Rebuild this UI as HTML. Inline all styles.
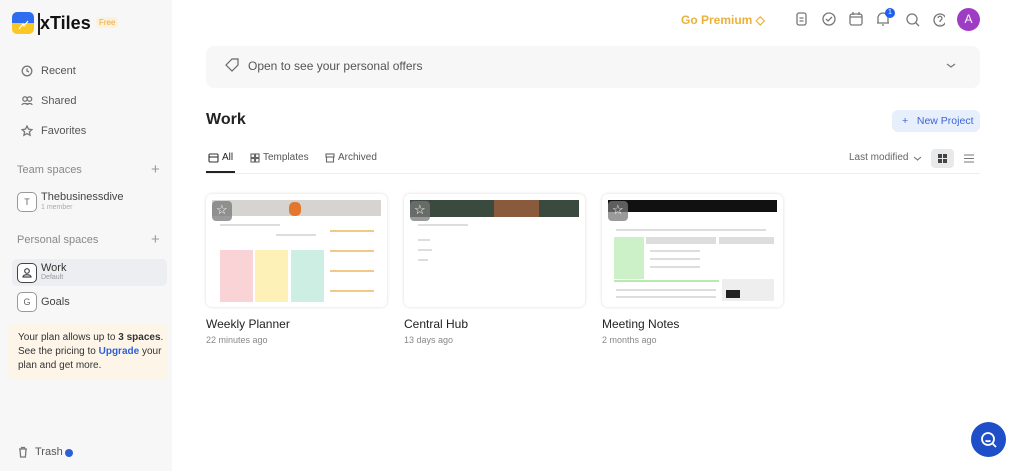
<!DOCTYPE html><html><head><style>
*{box-sizing:border-box;margin:0;padding:0}
body{width:1020px;height:471px;overflow:hidden;font-family:"Liberation Sans",sans-serif;background:#fff;position:relative;color:#222}
.sb{position:absolute;left:0;top:0;width:172px;height:471px;background:#f7f7f8}
.a{position:absolute;white-space:nowrap}
.nav{font-size:11px;color:#555}
.ic{stroke:#777;fill:none;stroke-width:1.3}
.box{position:absolute;width:20px;height:20px;border:1px solid #999;border-radius:5px;font-size:9px;color:#666;text-align:center;line-height:18px;background:#fff}
.card{position:absolute;top:194px;width:181px;height:113px;border-radius:6px;background:#fff;box-shadow:0 0 3px rgba(0,0,0,.15);overflow:hidden}
.star{position:absolute;left:6px;top:7px;width:20px;height:20px;background:rgba(120,120,120,.75);border-radius:4px}
.star:after{content:"\2606";position:absolute;left:4px;top:1px;color:#fff;font-size:13px}
.t{font-size:12px;color:#222}.s{font-size:9px;color:#888}
.ln{position:absolute;height:2px;background:#ddd}
</style></head><body>
<div class="sb"></div>
<div class="a" style="left:12px;top:12px;width:22px;height:11px;background:#2d6ef0;border-radius:5px 5px 0 0"></div>
<div class="a" style="left:12px;top:23px;width:22px;height:11px;background:#f9c823;border-radius:0 0 5px 5px"></div>
<svg class="a" style="left:12px;top:12px" width="22" height="22"><path d="M7 17l4-5 1 2 4-5" stroke="#fff" stroke-width="1.2" fill="none"/></svg>
<div class="a" style="left:38px;top:13px;width:1.5px;height:22px;background:#222"></div>
<div class="a" style="left:40px;top:13px;font-size:18px;font-weight:bold;color:#111">xTiles</div>
<div class="a" style="left:96px;top:17px;font-size:8px;color:#e8a93b;background:#fcf1dc;padding:1px 3px;border-radius:3px">Free</div>
<svg class="a" style="left:21px;top:65px" width="12" height="12"><circle class="ic" cx="6" cy="6" r="4.8"/><path class="ic" d="M6 3.5V6l2 1"/></svg>
<div class="a nav" style="left:41px;top:65px">Recent</div>
<svg class="a" style="left:21px;top:95px" width="12" height="12"><circle class="ic" cx="4" cy="4" r="2.2"/><circle class="ic" cx="8.5" cy="4" r="2.2"/><path class="ic" d="M1 10c0-2 6-2 6 0M6 10c0-2 5-2 5 0"/></svg>
<div class="a nav" style="left:41px;top:95px">Shared</div>
<svg class="a" style="left:21px;top:125px" width="12" height="12"><path class="ic" d="M6 1l1.5 3.2 3.4.4-2.5 2.3.7 3.4L6 8.6 2.9 10.3l.7-3.4L1.1 4.6l3.4-.4z"/></svg>
<div class="a nav" style="left:41px;top:125px">Favorites</div>
<div class="a nav" style="left:17px;top:164px;color:#888">Team spaces</div>
<div class="a" style="left:151px;top:161px;font-size:15px;color:#999">+</div>
<div class="box" style="left:17px;top:192px">T</div>
<div class="a" style="left:41px;top:191px;font-size:11px;color:#444">Thebusinessdive</div>
<div class="a" style="left:41px;top:204px;font-size:7px;color:#aaa">1 member</div>
<div class="a nav" style="left:17px;top:234px;color:#888">Personal spaces</div>
<div class="a" style="left:151px;top:231px;font-size:15px;color:#999">+</div>
<div class="a" style="left:12px;top:259px;width:155px;height:27px;background:#eceef1;border-radius:5px"></div>
<div class="box" style="left:17px;top:263px;border-color:#444"><svg width="18" height="18"><circle cx="9" cy="7" r="2.3" fill="none" stroke="#444" stroke-width="1.2"/><path d="M5 13c0-3 8-3 8 0z" fill="none" stroke="#444" stroke-width="1.2"/></svg></div>
<div class="a" style="left:41px;top:262px;font-size:11px;color:#333">Work</div>
<div class="a" style="left:41px;top:274px;font-size:7px;color:#999">Default</div>
<div class="box" style="left:17px;top:292px">G</div>
<div class="a" style="left:41px;top:296px;font-size:11px;color:#444">Goals</div>
<div class="a" style="left:8px;top:324px;width:160px;height:55px;background:#fdf6e8;border-radius:6px"></div>
<div class="a" style="left:18px;top:331px;font-size:10px;line-height:14px;color:#333">Your plan allows up to <b>3 spaces</b>.<br>See the pricing to <b style="color:#2d5fd8">Upgrade</b> your<br>plan and get more.</div>
<svg class="a" style="left:17px;top:446px" width="12" height="12"><path class="ic" d="M2 3h8M4.5 3V1.5h3V3M3 3l.6 8h4.8L9 3"/></svg>
<div class="a nav" style="left:35px;top:446px">Trash</div>
<div class="a" style="left:65px;top:449px;width:8px;height:8px;border-radius:50%;background:#2d5fd8"></div>

<div class="a" style="left:681px;top:13px;font-size:12px;font-weight:bold;color:#ebb13a">Go Premium &#9671;</div>
<svg class="a" style="left:794px;top:11px" width="110" height="18" fill="none" stroke="#777" stroke-width="1.3">
<rect x="3" y="2" width="9" height="12" rx="2"/><path d="M5.5 7h4M5.5 10h4"/>
<circle cx="35" cy="8" r="6"/><path d="M32 8l2 2 4-4"/>
<rect x="56" y="3" width="12" height="11" rx="2"/><path d="M56 6h12M59 1v3M65 1v3"/>
<path d="M84 12V7a5 5 0 0110 0v5zM83 12h12M88 14h2"/></svg>
<div class="a" style="left:885px;top:8px;width:10px;height:10px;border-radius:50%;background:#1e5ef0;color:#fff;font-size:7px;text-align:center;line-height:10px">1</div>
<svg class="a" style="left:905px;top:11px" width="40" height="18" fill="none" stroke="#777" stroke-width="1.3"><circle cx="7" cy="8" r="5"/><path d="M11 12l3 3"/><circle cx="35" cy="9" r="6"/><path d="M33 7a2 2 0 113 2c-1 .5-1 1-1 2M35 13v.5"/></svg>
<div class="a" style="left:957px;top:8px;width:23px;height:23px;border-radius:50%;background:#9f3cc4;color:#fff;font-size:12px;text-align:center;line-height:23px">A</div>

<div class="a" style="left:206px;top:46px;width:774px;height:42px;background:#f7f7f8;border-radius:8px"></div>
<svg class="a" style="left:224px;top:57px" width="18" height="18" fill="none" stroke="#666" stroke-width="1.2"><path d="M2 8l6-6h6v6l-6 6zM11 5.5h.1"/></svg>
<div class="a" style="left:248px;top:59px;font-size:12px;color:#555">Open to see your personal offers</div>
<svg class="a" style="left:946px;top:63px" width="10" height="6"><path d="M1 1l4 3 4-3" stroke="#777" fill="none" stroke-width="1.2"/></svg>

<div class="a" style="left:206px;top:111px;font-size:16px;font-weight:bold;color:#222">Work</div>
<div class="a" style="left:892px;top:110px;width:88px;height:22px;background:#e8effc;border-radius:6px;color:#3d64d8;font-size:10.5px;line-height:22px;padding-left:10px">+&nbsp;&nbsp; New Project</div>
<svg class="a" style="left:208px;top:153px" width="11" height="10" fill="none" stroke="#333" stroke-width="1.1"><rect x="1" y="1" width="9" height="8" rx="1"/><path d="M1 4h9"/></svg>
<div class="a" style="left:222px;top:152px;font-size:10px;color:#222">All</div>
<div class="a" style="left:206px;top:171px;width:29px;height:2px;background:#222"></div>
<svg class="a" style="left:250px;top:153px" width="10" height="10" fill="none" stroke="#666" stroke-width="1.1"><rect x="1" y="1" width="3.5" height="3.5"/><rect x="5.5" y="1" width="3.5" height="3.5"/><rect x="1" y="5.5" width="3.5" height="3.5"/><rect x="5.5" y="5.5" width="3.5" height="3.5"/></svg>
<div class="a" style="left:263px;top:152px;font-size:10px;color:#555">Templates</div>
<svg class="a" style="left:325px;top:153px" width="10" height="10" fill="none" stroke="#666" stroke-width="1.1"><rect x="1" y="1" width="8" height="3"/><path d="M1.5 4v5h7V4"/></svg>
<div class="a" style="left:338px;top:152px;font-size:10px;color:#555">Archived</div>
<div class="a" style="left:206px;top:173px;width:774px;height:1px;background:#eee"></div>
<div class="a" style="left:849px;top:152px;font-size:10px;color:#666">Last modified</div>
<svg class="a" style="left:913px;top:156px" width="9" height="6"><path d="M1 1l3.5 3 3.5-3" stroke="#777" fill="none" stroke-width="1.1"/></svg>
<div class="a" style="left:931px;top:149px;width:23px;height:19px;background:#e8e9eb;border-radius:4px"></div>
<svg class="a" style="left:938px;top:154px" width="9" height="9" fill="#444"><rect width="4" height="4"/><rect x="5" width="4" height="4"/><rect y="5" width="4" height="4"/><rect x="5" y="5" width="4" height="4"/></svg>
<svg class="a" style="left:964px;top:154px" width="10" height="9" stroke="#777" stroke-width="1.1"><path d="M0 1h10M0 4.5h10M0 8h10"/></svg>

<div class="card" style="left:206px"><div class="a" style="left:6px;top:6px;width:169px;height:16px;background:#d6d4d1"></div>
<div class="a" style="left:83px;top:8px;width:12px;height:14px;background:#e4762d;border-radius:5px"></div>
<div class="ln" style="left:14px;top:30px;width:60px"></div><div class="ln" style="left:70px;top:40px;width:40px"></div>
<div class="a" style="left:14px;top:56px;width:33px;height:52px;background:#f9d3d6"></div>
<div class="a" style="left:49px;top:56px;width:33px;height:52px;background:#fdf1b8"></div>
<div class="a" style="left:85px;top:56px;width:33px;height:52px;background:#cdeee3"></div>
<div class="a" style="left:124px;top:36px;width:44px;height:2px;background:#f3c98a"></div>
<div class="a" style="left:124px;top:56px;width:44px;height:2px;background:#f3c98a"></div>
<div class="a" style="left:124px;top:76px;width:44px;height:2px;background:#f3c98a"></div>
<div class="a" style="left:124px;top:96px;width:44px;height:2px;background:#f3c98a"></div>
<div class="star"></div></div>
<div class="card" style="left:404px"><div class="a" style="left:6px;top:6px;width:169px;height:17px;background:#3a4a3e"></div><div class="a" style="left:90px;top:6px;width:45px;height:17px;background:#8a5a3c"></div>
<div class="ln" style="left:14px;top:30px;width:50px"></div><div class="ln" style="left:14px;top:45px;width:12px"></div><div class="ln" style="left:14px;top:55px;width:14px"></div><div class="ln" style="left:14px;top:65px;width:10px"></div>
<div class="star"></div></div>
<div class="card" style="left:602px"><div class="a" style="left:6px;top:6px;width:169px;height:12px;background:#111"></div>
<div class="ln" style="left:14px;top:35px;width:150px"></div>
<div class="a" style="left:12px;top:43px;width:30px;height:42px;background:#ccf1c8"></div>
<div class="a" style="left:44px;top:43px;width:70px;height:7px;background:#ddd"></div>
<div class="a" style="left:117px;top:43px;width:55px;height:7px;background:#ddd"></div>
<div class="ln" style="left:48px;top:56px;width:50px"></div><div class="ln" style="left:48px;top:64px;width:50px"></div><div class="ln" style="left:48px;top:72px;width:50px"></div>
<div class="a" style="left:12px;top:86px;width:105px;height:2px;background:#b8eab2"></div>
<div class="ln" style="left:14px;top:95px;width:100px"></div><div class="ln" style="left:14px;top:102px;width:100px"></div>
<div class="a" style="left:120px;top:85px;width:52px;height:22px;background:#eee"></div>
<div class="a" style="left:124px;top:96px;width:14px;height:8px;background:#222"></div>
<div class="star"></div></div>
<div class="a t" style="left:206px;top:317px">Weekly Planner</div><div class="a s" style="left:206px;top:335px">22 minutes ago</div>
<div class="a t" style="left:404px;top:317px">Central Hub</div><div class="a s" style="left:404px;top:335px">13 days ago</div>
<div class="a t" style="left:602px;top:317px">Meeting Notes</div><div class="a s" style="left:602px;top:335px">2 months ago</div>
<div class="a" style="left:971px;top:422px;width:35px;height:35px;border-radius:50%;background:#1e4fc8"></div>
<svg class="a" style="left:979px;top:430px" width="20" height="20" fill="none" stroke="#fff" stroke-width="1.8"><circle cx="9" cy="9" r="6"/><path d="M13 13l4 4M6.5 10.5c1.5 1 3.5 1 5 0"/></svg>
</body></html>
